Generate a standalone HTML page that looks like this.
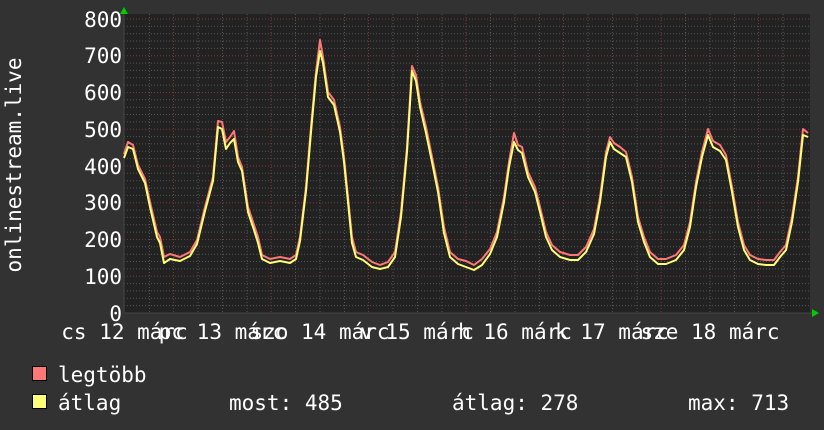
<!DOCTYPE html>
<html><head><meta charset="utf-8"><style>
html,body{margin:0;padding:0;background:#323232;}
svg{display:block}
text{font-family:"DejaVu Sans Mono","Liberation Mono",monospace;fill:#fff;font-size:21px}
</style></head><body>
<svg width="824" height="430" viewBox="0 0 824 430" xmlns="http://www.w3.org/2000/svg">
<rect width="824" height="430" fill="#323232"/>
<rect x="124" y="14" width="686" height="299" fill="#222"/>
<g stroke="#555" stroke-width="1" stroke-dasharray="1,2">
<path d="M124 305.6H810M124 298.3H810M124 290.9H810M124 283.6H810M124 268.9H810M124 261.5H810M124 254.2H810M124 246.8H810M124 232.1H810M124 224.8H810M124 217.4H810M124 210.1H810M124 195.4H810M124 188H810M124 180.7H810M124 173.3H810M124 158.6H810M124 151.3H810M124 143.9H810M124 136.6H810M124 121.9H810M124 114.5H810M124 107.2H810M124 99.8H810M124 85.1H810M124 77.8H810M124 70.4H810M124 63.1H810M124 48.4H810M124 41H810M124 33.7H810M124 26.3H810"/>
<path d="M149.5 14V313M198 14V313M222.5 14V313M247 14V313M295.5 14V313M320 14V313M344.5 14V313M393 14V313M417.5 14V313M442 14V313M490.5 14V313M515 14V313M539.5 14V313M588 14V313M612.5 14V313M637 14V313M685.5 14V313M710 14V313M734.5 14V313M783 14V313"/>
</g>
<g stroke="#7a3a3a" stroke-width="1" stroke-dasharray="1,2">
<path d="M124 276.3H810M124 239.5H810M124 202.8H810M124 166H810M124 129.3H810M124 92.5H810M124 55.8H810M124 19H810"/>
<path d="M173.5 14V313M271 14V313M368.5 14V313M466 14V313M563.5 14V313M661 14V313M758.5 14V313"/>
</g>
<line x1="124" y1="14" x2="124" y2="313" stroke="#444"/>
<line x1="124" y1="313" x2="812" y2="313" stroke="#444"/>
<polygon points="120,14 128,14 124,7" fill="#0c0"/>
<polygon points="812,309 812,317 819,313" fill="#0c0"/>
<g transform="translate(0,-3)">
<polyline fill="none" stroke="#ff7777" stroke-width="2" stroke-linejoin="round" points="124,157 128,145 133,148 138,168 145,182 150,205 157,235 160,240 164,260 170,257 180,260 190,255 197,243 205,210 213,180 218,124 222,125 226,145 230,140 234,134 238,160 242,170 248,210 254,228 258,240 262,258 270,262 280,260 290,262 296,258 300,240 306,190 311,130 316,75 320,43 323,60 328,95 334,103 340,130 344,160 348,200 352,240 356,255 363,258 372,265 380,268 388,265 395,255 401,215 407,150 412,69 416,78 420,105 426,130 432,160 438,190 444,230 450,255 458,262 466,264 474,268 482,262 490,252 497,235 504,200 509,165 514,136 518,148 522,150 528,175 535,190 540,210 546,235 552,248 560,255 570,258 578,258 586,250 594,232 600,200 606,155 610,140 614,146 620,150 626,155 632,180 638,220 644,240 650,255 658,262 666,262 676,258 684,248 690,225 696,185 702,155 708,132 713,144 720,148 726,158 732,190 738,225 744,248 750,258 758,262 766,263 774,263 780,255 786,248 792,220 798,180 803,132 808,136"/>
<polyline fill="none" stroke="#ffff77" stroke-width="2" stroke-linejoin="round" points="124,161 128,150 133,152 138,172 145,186 150,210 157,240 160,246 164,266 170,262 180,264 190,259 197,247 205,214 213,184 218,130 222,132 226,152 230,146 234,142 238,165 242,174 248,215 254,233 258,246 262,262 270,266 280,264 290,266 296,262 300,244 306,194 311,135 316,80 320,54 323,66 328,100 334,108 340,135 344,165 348,205 352,246 356,260 363,263 372,270 380,272 388,270 395,260 401,220 407,155 412,74 416,84 420,110 426,136 432,165 438,195 444,236 450,260 458,267 466,270 474,273 482,268 490,257 497,240 504,205 509,170 514,145 518,153 522,156 528,180 535,195 540,215 546,240 552,253 560,260 570,263 578,263 586,255 594,237 600,205 606,160 610,145 614,152 620,156 626,160 632,185 638,225 644,245 650,260 658,267 666,267 676,263 684,253 690,230 696,190 702,160 708,138 713,150 720,154 726,163 732,195 738,230 744,253 750,263 758,267 766,268 774,268 780,260 786,253 792,225 798,185 803,138 808,140"/>
</g>
<g text-anchor="end">
<text x="122" y="27">800</text><text x="122" y="63">700</text><text x="122" y="100">600</text><text x="122" y="137">500</text><text x="122" y="174">400</text>
<text x="122" y="210">300</text><text x="122" y="247">200</text><text x="122" y="284">100</text><text x="122" y="321">0</text>
</g>
<g text-anchor="middle">
<text x="124.5" y="339">cs 12 márc</text><text x="222" y="339">pc 13 márc</text><text x="320" y="339">szo 14 márc</text><text x="417" y="339">v 15 márc</text><text x="515" y="339">h 16 márc</text><text x="612" y="339">k 17 márc</text><text x="710" y="339">sze 18 márc</text>
</g>
<text transform="translate(21,165) rotate(-90)" text-anchor="middle">onlinestream.live</text>
<rect x="32.5" y="366.5" width="14" height="14" fill="#ff7777" stroke="#000"/>
<rect x="32.5" y="394.5" width="14" height="14" fill="#ffff77" stroke="#000"/>
<text x="58" y="382">legtöbb</text>
<text x="58" y="410">átlag</text>
<text x="229" y="410">most: 485</text>
<text x="452" y="410">átlag: 278</text>
<text x="688" y="410">max: 713</text>
</svg>
</body></html>
